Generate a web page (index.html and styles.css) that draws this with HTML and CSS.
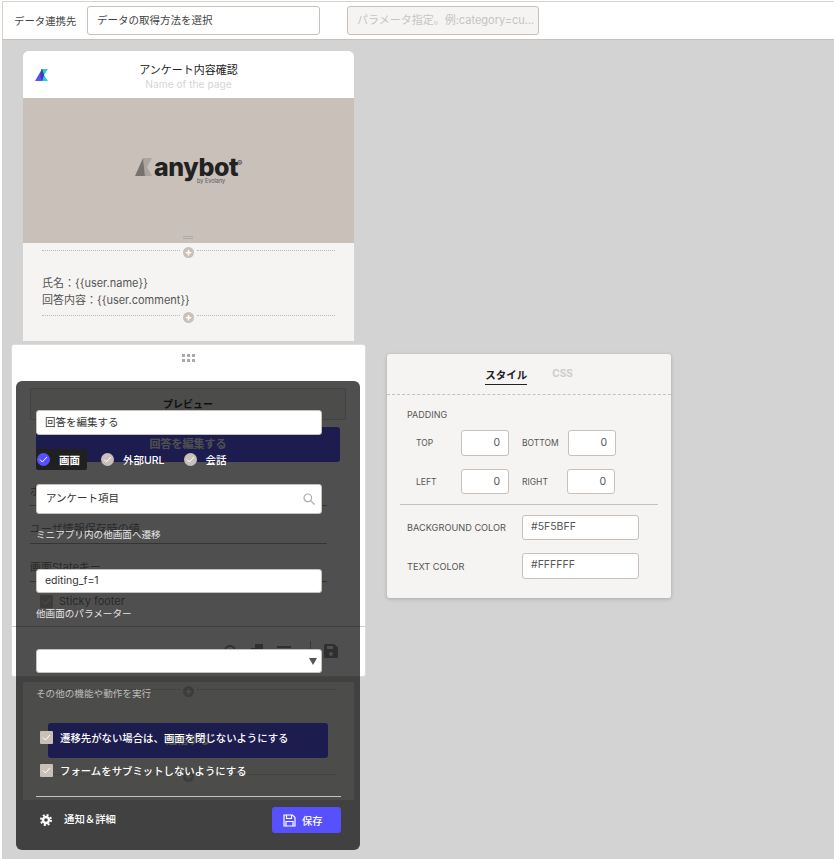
FILE: index.html
```html
<!DOCTYPE html>
<html lang="ja">
<head>
  <meta charset="UTF-8" />
  <meta name="viewport" content="width=device-width, initial-scale=1.0"/>
  <title>アンケート内容確認</title>
  <link rel="stylesheet" href="styles.css">
</head>
<body>
  <div class="topbar">
    <span class="topbar-label">データ連携先</span>
    <div class="topbar-select">データの取得方法を選択</div>
    <div class="topbar-param">パラメータ指定。例:category=cu...</div>
  </div>

  <div class="canvas">
    <!-- mini app page -->
    <div class="page">
      <div class="page-head">
        <svg class="page-logo" width="14" height="14" viewBox="0 0 14 14">
          <path d="M6 1h7L9 7l4 6H6z" fill="#22d3c5"/>
          <path d="M0 13L7 1l2 6-2 6z" fill="#5650ff"/>
          <path d="M7 1l2 6-2 6-2-6z" fill="#3f3bb8"/>
        </svg>
        <div class="page-title">アンケート内容確認</div>
        <div class="page-sub">Name of the page</div>
      </div>
      <div class="page-image">
        <div class="anybot">
          <svg width="18" height="18" viewBox="0 0 18 18">
            <path d="M8 0h9l-5 9 5 9H10z" fill="#aaa5a1"/>
            <path d="M0 18L8 0l2 18z" fill="#77726f"/>
          </svg>
          <span class="anybot-name">anybot</span>
          <span class="anybot-reg">®</span>
          <span class="anybot-by">by Evolany</span>
        </div>
        <div class="page-handle"></div>
      </div>
      <div class="page-body">
        <div class="adder"><span class="adder-line"></span><span class="adder-plus">+</span><span class="adder-line"></span></div>
        <p class="page-text">氏名：{{user.name}}<br>回答内容：{{user.comment}}</p>
        <div class="adder"><span class="adder-line"></span><span class="adder-plus">+</span><span class="adder-line"></span></div>
      </div>
    </div>

    <div class="page-lower">
      <div class="adder"><span class="adder-line"></span><span class="adder-plus">+</span><span class="adder-line"></span></div>
      <div class="page-button">送信する</div>
      <div class="adder adder-last"><span class="adder-line"></span><span class="adder-plus">+</span><span class="adder-line"></span></div>
    </div>

    <!-- button settings window -->
    <div class="popup">
      <div class="grip"><i></i><i></i><i></i><i></i><i></i><i></i></div>
      <div class="preview-title">プレビュー</div>
      <div class="preview-button">回答を編集する</div>
      <div class="popup-row first">ボタン設定</div>
      <div class="popup-row">ユーザ情報保存時の値</div>
      <div class="popup-row">画面Stateキー</div>
      <div class="sticky"><span class="check"><svg width="9" height="7" viewBox="0 0 9 7"><path d="M1 3.500L3.300 6 8 1" fill="none" stroke="#fff"/></svg></span>Sticky footer</div>
      <div class="popup-foot">
        <svg width="14" height="14" viewBox="0 0 14 14" fill="none" stroke="#999" stroke-width="2"><circle cx="7" cy="7" r="5"/></svg>
        <svg width="14" height="14" viewBox="0 0 14 14" fill="#999"><path d="M1 4h8v10H1zM5 0h8v10H5z"/></svg>
        <svg width="14" height="14" viewBox="0 0 14 14" fill="#999"><path d="M0 2h14v2H0zM2 5h10v9H2z"/></svg>
        <span class="popup-sep"></span>
        <svg width="14" height="14" viewBox="0 0 14 14" fill="#999"><path d="M0 1.500Q0 0 1.500 0H10l4 3.500v9Q14 14 12.500 14h-11Q0 14 0 12.500zM3 2v3h6V2zM7 8a2 2 0 1 0 .01 0z"/></svg>
      </div>
    </div>

    <!-- dark action menu on top -->
    <div class="menu">
      <div class="menu-input name-input">回答を編集する</div>
      <div class="tabs">
        <div class="tab active"><span class="radio on"><svg width="9" height="7" viewBox="0 0 9 7"><path d="M1 3.500L3.300 6 8 1" fill="none" stroke="#fff"/></svg></span>画面</div>
        <div class="tab"><span class="radio"><svg width="9" height="7" viewBox="0 0 9 7"><path d="M1 3.500L3.300 6 8 1" fill="none" stroke="#fff"/></svg></span>外部URL</div>
        <div class="tab"><span class="radio"><svg width="9" height="7" viewBox="0 0 9 7"><path d="M1 3.500L3.300 6 8 1" fill="none" stroke="#fff"/></svg></span>会話</div>
      </div>
      <div class="menu-input search-input">
        アンケート項目
        <svg width="12" height="12" viewBox="0 0 12 12" fill="none" stroke="#aaa" stroke-width="1.200"><circle cx="4.800" cy="4.800" r="3.800"/><path d="M7.600 7.600L11.500 11.500"/></svg>
      </div>
      <div class="menu-label">ミニアプリ内の他画面へ遷移</div>
      <div class="menu-input param-input">editing_f=1</div>
      <div class="menu-label">他画面のパラメーター</div>
      <div class="menu-input select-input"><span class="select-arrow"></span></div>
      <div class="menu-label muted">その他の機能や動作を実行</div>
      <div class="check-row first"><span class="check"><svg width="9" height="7" viewBox="0 0 9 7"><path d="M1 3.500L3.300 6 8 1" fill="none" stroke="#fff"/></svg></span>遷移先がない場合は、画面を閉じないようにする</div>
      <div class="check-row"><span class="check"><svg width="9" height="7" viewBox="0 0 9 7"><path d="M1 3.500L3.300 6 8 1" fill="none" stroke="#fff"/></svg></span>フォームをサブミットしないようにする</div>
      <div class="menu-foot">
        <div class="menu-notify">
          <svg width="12" height="12" viewBox="0 0 12 12" fill="none" stroke="#fff">
            <circle cx="6" cy="6" r="3" stroke-width="2.400"/>
            <circle cx="6" cy="6" r="5" stroke-width="2" stroke-dasharray="2 1.930"/>
          </svg>
          <span>通知＆詳細</span>
        </div>
        <div class="save-button">
          <svg width="13" height="13" viewBox="0 0 13 13" fill="none" stroke="#fff" stroke-width="1.200"><path d="M1 1h8.500L12 3.500V12H1zM3.500 1v3.500h5V1M3 12V7.500h7V12"/></svg>
          保存
        </div>
      </div>
    </div>

    <!-- style panel -->
    <div class="panel">
      <div class="panel-tabs">
        <span class="panel-tab active">スタイル</span>
        <span class="panel-tab">CSS</span>
      </div>
      <div class="panel-body">
        <div class="panel-heading">PADDING</div>
        <div class="pad-row">
          <span class="pad-label">TOP</span><div class="pad-input tall">0</div>
          <span class="pad-label second">BOTTOM</span><div class="pad-input tall">0</div>
        </div>
        <div class="pad-row">
          <span class="pad-label">LEFT</span><div class="pad-input">0</div>
          <span class="pad-label second narrow">RIGHT</span><div class="pad-input">0</div>
        </div>
        <div class="panel-rule"></div>
        <div class="color-row"><span>BACKGROUND COLOR</span><div class="color-input">#5F5BFF</div></div>
        <div class="color-row"><span>TEXT COLOR</span><div class="color-input">#FFFFFF</div></div>
      </div>
    </div>
  </div>
</body>
</html>
```

FILE: styles.css
```css
* {
  box-sizing: border-box;
}
body {
  margin: 0;
  height: 859px;
  overflow: hidden;
  background: #fff;
  color: #333;
  font-family: Inter, "Noto Sans CJK JP", sans-serif;
  font-size: 11px;
}
.topbar {
  height: 39px;
  margin-left: 2px;
  margin-top: 1px;
  padding-left: 11px;
  display: flex;
  align-items: center;
  background: #fff;
  border-top: 1px solid #d8d2cd;
  border-left: 1px solid #d8d2cd;
  border-bottom: 1px solid #c9c0ba;
}
.topbar-label {
  width: 73px;
  font-size: 10.400px;
  color: #444;
}
.topbar-select, .topbar-param {
  height: 29px;
  line-height: 27px;
  padding-left: 9px;
  border: 1px solid #c9c0ba;
  border-radius: 3px;
}
.topbar-select {
  width: 233px;
  font-size: 10.500px;
  color: #444;
}
.topbar-param {
  width: 192px;
  margin-left: 27px;
  background: #f5f4f2;
  color: #c4c4c4;
  white-space: nowrap;
}
.canvas {
  position: relative;
  height: 819px;
  margin-left: 2px;
  background: #d3d3d3;
  border-left: 1px solid #d8d2cd;
  overflow: hidden;
}

/* page */
.page {
  position: absolute;
  left: 20px;
  top: 11px;
  width: 331px;
  height: 290px;
  background: #f5f4f2;
  border-radius: 6px 6px 0 0;
  overflow: hidden;
}
.page-lower {
  position: absolute;
  left: 20px;
  top: 642px;
  width: 331px;
  height: 118px;
  padding-top: 3px;
  background: #f5f4f2;
}
.page-head {
  position: relative;
  height: 47px;
  padding-top: 11px;
  background: #fff;
  text-align: center;
}
.page-logo {
  position: absolute;
  left: 12px;
  top: 17px;
}
.page-title {
  line-height: 16px;
  color: #222;
}
.page-sub {
  line-height: 12px;
  font-size: 10.200px;
  color: #d5d5d5;
}
.page-image {
  position: relative;
  height: 145px;
  padding: 59px 0 0 112px;
  background: #c9c0ba;
}
.anybot {
  position: relative;
  display: flex;
  align-items: center;
  height: 20px;
  gap: 1px;
}
.anybot-name {
  font-size: 25px;
  font-weight: 800;
  line-height: 20px;
  letter-spacing: -0.4px;
  color: #222;
}
.anybot-reg {
  position: absolute;
  left: 102px;
  top: 1px;
  font-size: 8px;
  line-height: 10px;
  color: #333;
}
.anybot-by {
  position: absolute;
  left: 62px;
  top: 21px;
  font-size: 5.500px;
  line-height: 7px;
  color: #555;
}
.page-handle {
  position: absolute;
  left: 160px;
  bottom: 4px;
  width: 10px;
  height: 3px;
  border-top: 1px solid #aaa;
  border-bottom: 1px solid #aaa;
}
.page-body {
  padding-top: 3px;
}
.adder {
  display: flex;
  align-items: flex-start;
  gap: 3px;
  height: 11px;
  padding: 0 19px;
}
.adder-line {
  flex: 1;
  margin-top: 4px;
  border-top: 1px dotted #bbb;
}
.adder-plus {
  width: 11px;
  height: 11px;
  margin-top: 1px;
  border-radius: 50%;
  background: #c9c0ba;
  color: #fff;
  font-size: 11px;
  font-weight: 700;
  line-height: 10px;
  text-align: center;
}
.page-text {
  margin: 18px 19px 2px;
  font-size: 11px;
  line-height: 17px;
  color: #555;
}
.page-button {
  width: 280px;
  height: 35px;
  margin: 27px 0 0 25px;
  border-radius: 3px;
  background: #5f5bff;
  color: #fff;
  font-weight: 700;
  line-height: 35px;
  text-align: center;
}
.adder-last {
  margin-top: 12px;
}

/* settings window */
.popup {
  position: absolute;
  left: 8px;
  top: 304px;
  width: 355px;
  height: 333px;
  background: #fff;
  border: 1px solid #e0dcd8;
  border-radius: 3px;
}
.grip {
  display: grid;
  grid-template-columns: repeat(3, 3px);
  gap: 2px;
  width: 13px;
  margin: 9px auto 0;
}
.grip i {
  height: 3px;
  background: #aaa;
}
.preview-title {
  height: 32px;
  margin: 26px 19px 0 18px;
  background: #f5f4f2;
  border: 1px solid #d5d5d5;
  font-size: 10px;
  font-weight: 700;
  line-height: 30px;
  text-align: center;
  color: #333;
}
.preview-button {
  height: 35px;
  margin: 7px 25px 0 24px;
  border-radius: 3px;
  background: #5f5bff;
  color: #fff;
  font-weight: 700;
  line-height: 35px;
  text-align: center;
}
.popup-row {
  width: 297px;
  height: 24px;
  margin: 14px 0 0 18px;
  border-bottom: 1px solid #aaa;
  color: #888;
  line-height: 18px;
  font-size: 11px;
}
.popup-row.first {
  margin-top: 20px;
}
.sticky {
  display: flex;
  align-items: center;
  gap: 6px;
  height: 16px;
  margin: 11px 0 0 28px;
  font-size: 11px;
  color: #888;
}
.popup-foot {
  display: flex;
  justify-content: flex-end;
  align-items: flex-start;
  gap: 13px;
  height: 48px;
  margin-top: 17px;
  padding: 17px 27px 0 0;
  border-top: 1px solid #ccc;
}
.popup-sep {
  width: 1px;
  height: 16px;
  margin: -3px 0 0 6px;
  background: #aaa;
}

/* action menu */
.menu {
  position: absolute;
  left: 13px;
  top: 341px;
  width: 344px;
  height: 469px;
  padding: 29px 19px 0 20px;
  background: rgba(0, 0, 0, 0.69);
  border-radius: 6px;
  color: #fff;
}
.menu-input {
  width: 286px;
  height: 25px;
  padding-left: 8px;
  background: #fff;
  border-radius: 3px;
  border: 1px solid #c9c0ba;
  font-size: 10.500px;
  color: #333;
  line-height: 23px;
}
.tabs {
  display: flex;
  height: 21px;
  margin-top: 14px;
  font-size: 10.500px;
}
.tab {
  display: flex;
  align-items: center;
  gap: 9px;
  padding: 0 6px 0 1px;
  margin-right: 12px;
  border-radius: 2px;
  font-weight: 500;
}
.tab.active {
  padding-right: 7px;
  margin-right: 13px;
  background: #202020;
  font-weight: 700;
}
.radio {
  display: flex;
  align-items: center;
  justify-content: center;
  width: 13px;
  height: 13px;
  border-radius: 50%;
  background: #c9c0ba;
}
.radio.on {
  background: #5650ff;
}
.search-input {
  position: relative;
  height: 30px;
  margin-top: 14px;
  padding-left: 9px;
  line-height: 28px;
}
.search-input svg {
  position: absolute;
  right: 6px;
  top: 8px;
}
.menu-label {
  margin-top: 13px;
  line-height: 16px;
  font-size: 9.600px;
  color: #e6e6e6;
}
.muted {
  color: #bdbdbd;
}
.param-input {
  height: 24px;
  margin-top: 26px;
  line-height: 22px;
}
.select-input {
  position: relative;
  height: 24px;
  margin-top: 27px;
}
.select-arrow {
  position: absolute;
  right: 4px;
  top: 8px;
  border: 4px solid transparent;
  border-top: 7px solid #555;
  border-bottom: 0;
}
.check-row {
  display: flex;
  align-items: center;
  gap: 7px;
  height: 16px;
  margin: 17px 0 0 4px;
  font-weight: 500;
  font-size: 10.400px;
}
.check-row.first {
  margin-top: 27px;
}
.check {
  display: flex;
  align-items: center;
  justify-content: center;
  width: 13px;
  height: 13px;
  border-radius: 1px;
  background: #c9c0ba;
}
.menu-foot {
  display: flex;
  justify-content: space-between;
  width: 305px;
  margin-top: 18px;
  padding-top: 10px;
  border-top: 1px solid #c9c0ba;
}
.menu-notify {
  display: flex;
  align-items: center;
  gap: 12px;
  height: 22px;
  padding-left: 4px;
  font-size: 10.400px;
  font-weight: 500;
}
.menu-notify svg {
  margin-top: 3px;
}
.save-button {
  display: flex;
  align-items: center;
  gap: 6px;
  width: 69px;
  height: 26px;
  padding-left: 11px;
  background: #5650ff;
  border-radius: 3px;
  font-size: 10.200px;
  font-weight: 500;
}

/* style panel */
.panel {
  position: absolute;
  left: 384px;
  top: 314px;
  width: 284px;
  height: 244px;
  background: #f5f4f2;
  border-radius: 3px;
  box-shadow: 0 1px 4px rgba(0, 0, 0, 0.2);
}
.panel-tabs {
  display: flex;
  justify-content: center;
  gap: 25px;
  height: 41px;
  padding-top: 13px;
  border-bottom: 1px dashed #c9c0ba;
}
.panel-tab {
  height: 18px;
  font-size: 10px;
  font-weight: 700;
  color: #ccc;
}
.panel-tab.active {
  color: #222;
  font-size: 10.500px;
  border-bottom: 1px solid #222;
}
.panel-body {
  padding: 13px 13px 0 20px;
}
.panel-heading {
  line-height: 14px;
  font-size: 9px;
  color: #555;
}
.pad-row {
  display: flex;
  align-items: center;
  margin-top: 8px;
}
.pad-row + .pad-row {
  margin-top: 13px;
}
.pad-label {
  width: 54px;
  padding-left: 9px;
  font-size: 8.500px;
  color: #555;
}
.pad-label.second {
  width: 46px;
  margin-left: 13px;
  padding-left: 0;
}
.pad-label.narrow {
  width: 45px;
}
.pad-input {
  width: 48px;
  height: 25px;
  padding-right: 8px;
  background: #fff;
  border: 1px solid #c9c0ba;
  border-radius: 3px;
  font-size: 10.500px;
  line-height: 23px;
  text-align: right;
  color: #555;
}
.pad-input.tall {
  height: 26px;
}
.panel-rule {
  height: 1px;
  margin: 10px 0 0 -7px;
  background: #c9c0ba;
}
.color-row {
  display: flex;
  align-items: center;
  height: 26px;
  margin-top: 13px;
  font-size: 9.200px;
  color: #555;
}
.panel-rule + .color-row {
  height: 25px;
  margin-top: 10px;
}
.color-row span {
  width: 115px;
}
.color-input {
  width: 117px;
  height: 100%;
  padding-left: 8px;
  background: #fff;
  border: 1px solid #c9c0ba;
  border-radius: 3px;
  font-size: 10.500px;
  line-height: 22px;
  color: #555;
}
```
